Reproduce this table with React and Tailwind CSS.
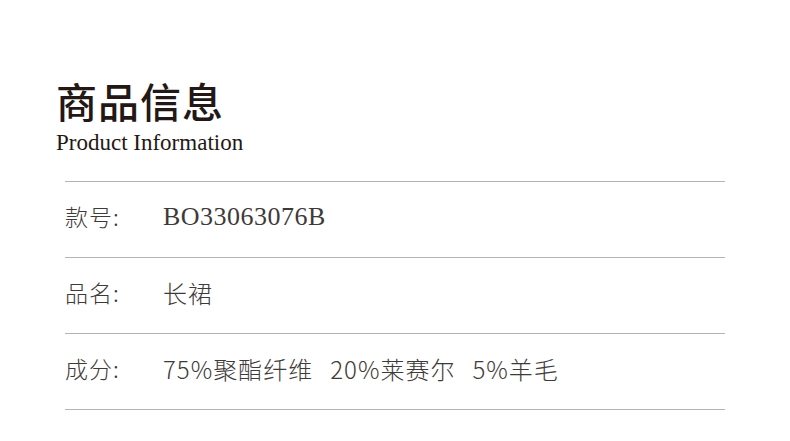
function Row({ label, children }) {
  return (
    <div className="h-[76px] pb-[6px] border-b border-[#b4b4b4] flex items-center text-[#3e3a39]">
      <div className="w-[98px] text-[23px] font-light tracking-[1px] font-['Noto_Sans_CJK_SC',sans-serif]">
        {label}
      </div>
      {children}
    </div>
  );
}

export default function App() {
  return (
    <div className="w-[790px] h-[441px] bg-white overflow-hidden">
      <div className="pt-[76px] pl-[56px] text-[#231815]">
        <div className="text-[41px] leading-[48px] font-medium tracking-[1px] font-['Noto_Sans_CJK_SC',sans-serif]">
          商品信息
        </div>
        <div className="mt-[5px] text-[23px] leading-[28px] font-['Liberation_Serif',serif]">
          Product Information
        </div>
      </div>
      <div className="ml-[65px] w-[660px] mt-[24px] border-t border-[#b4b4b4]">
        <Row label="款号:">
          <span className="text-[26px] tracking-[0.5px] font-['Liberation_Serif',serif]">BO33063076B</span>
        </Row>
        <Row label="品名:">
          <span className="text-[24px] font-light tracking-[1px] font-['Noto_Sans_CJK_SC',sans-serif]">长裙</span>
        </Row>
        <Row label="成分:">
          <span className="flex gap-[17px] text-[24px] font-light tracking-[1px] font-['Noto_Sans_CJK_SC',sans-serif]">
            <span>75%聚酯纤维</span>
            <span>20%莱赛尔</span>
            <span>5%羊毛</span>
          </span>
        </Row>
      </div>
    </div>
  );
}
